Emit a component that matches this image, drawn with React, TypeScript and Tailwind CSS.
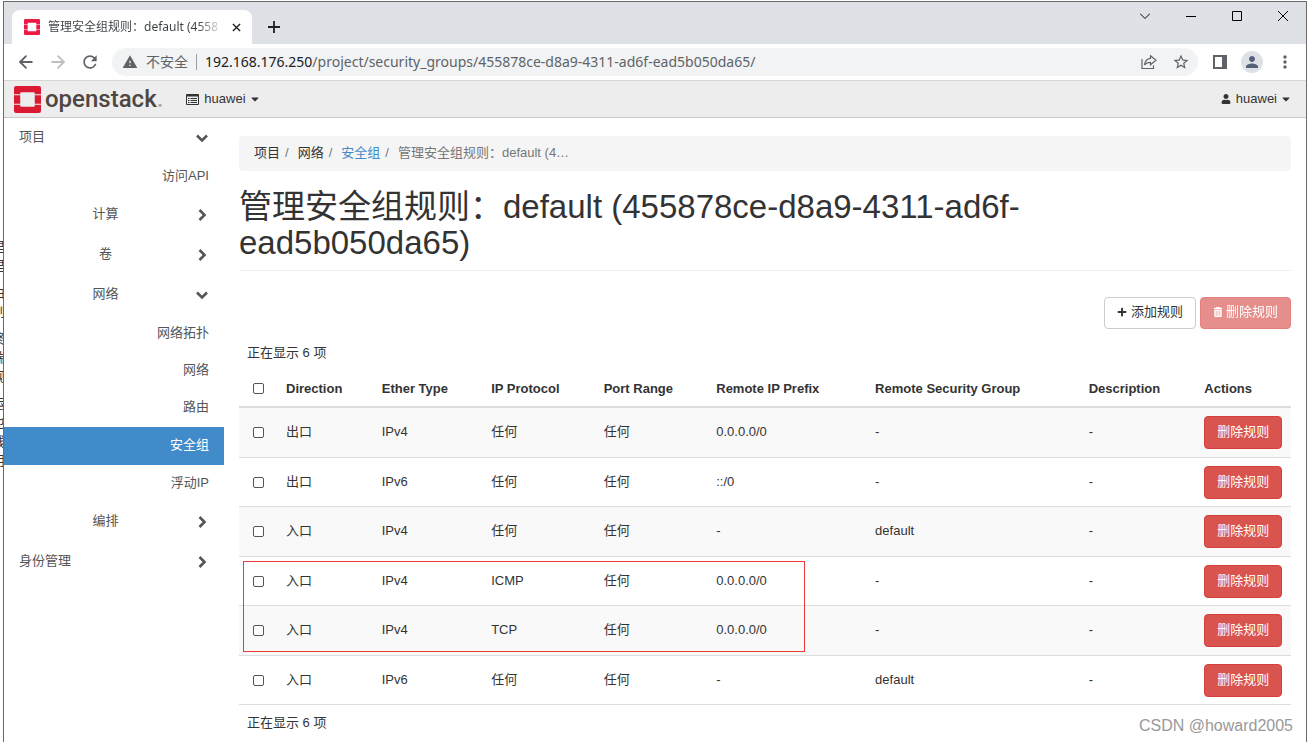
import type { ReactNode } from "react";
import { ArrowLeft, ArrowRight } from "lucide-react";
import { FaCaretDown, FaPlus, FaUser } from "react-icons/fa";
import { FaTrashCan } from "react-icons/fa6";
import { MdMoreVert, MdPerson, MdRefresh, MdStarBorder, MdWarning } from "react-icons/md";

interface Rule {
  direction: string;
  etherType: string;
  protocol: string;
  portRange: string;
  prefix: string;
  group: string;
}

const RULES: Rule[] = [
  { direction: "出口", etherType: "IPv4", protocol: "任何", portRange: "任何", prefix: "0.0.0.0/0", group: "-" },
  { direction: "出口", etherType: "IPv6", protocol: "任何", portRange: "任何", prefix: "::/0", group: "-" },
  { direction: "入口", etherType: "IPv4", protocol: "任何", portRange: "任何", prefix: "-", group: "default" },
  { direction: "入口", etherType: "IPv4", protocol: "ICMP", portRange: "任何", prefix: "0.0.0.0/0", group: "-" },
  { direction: "入口", etherType: "IPv4", protocol: "TCP", portRange: "任何", prefix: "0.0.0.0/0", group: "-" },
  { direction: "入口", etherType: "IPv6", protocol: "任何", portRange: "任何", prefix: "-", group: "default" },
];

const COLUMNS = [
  { label: "Direction", width: "w-[9.1%]" },
  { label: "Ether Type", width: "w-[10.4%]" },
  { label: "IP Protocol", width: "w-[10.7%]" },
  { label: "Port Range", width: "w-[10.7%]" },
  { label: "Remote IP Prefix", width: "w-[15.1%]" },
  { label: "Remote Security Group", width: "w-[20.3%]" },
  { label: "Description", width: "w-[11%]" },
  { label: "Actions", width: "" },
];

const BACKGROUND_LINES = [["里", "里"], ["由", "制"], ["终", "端", "观"], ["运", "也", "线", "用"]];

function OpenStackMark({ className, color }: { className: string; color: string }) {
  return (
    <svg viewBox="0 0 26 26" className={className} aria-hidden="true">
      <path
        fill={color}
        d="M2 0h22a2 2 0 0 1 2 2v6h-6V7a1 1 0 0 0-1-1H7a1 1 0 0 0-1 1v1H0V2a2 2 0 0 1 2-2zM0 9h6v8H0zM20 9h6v8h-6zM0 18h6v1a1 1 0 0 0 1 1h12a1 1 0 0 0 1-1v-1h6v6a2 2 0 0 1-2 2H2a2 2 0 0 1-2-2z"
      />
    </svg>
  );
}

function Chevron({ open }: { open?: boolean }) {
  return (
    <svg viewBox="0 0 12 12" className="size-3" fill="none" stroke="currentColor" strokeWidth="2.6" aria-hidden="true">
      <path d={open ? "M1 3.500l5 5 5-5" : "M3.500 1l5 5-5 5"} />
    </svg>
  );
}

function TabStrip() {
  return (
    <div className="flex h-[42px] shrink-0 items-end bg-[#dee1e6] pl-2 text-[#202124]">
      <div className="flex h-[34px] w-60 items-center rounded-t-lg bg-white pr-2 pl-3">
        <OpenStackMark className="mr-2 size-4 shrink-0" color="#ed1944" />
        <span className="min-w-0 flex-1 overflow-hidden bg-linear-to-r from-[#3c4043] from-85% to-transparent bg-clip-text font-['Noto_Sans','Noto_Sans_CJK_SC',sans-serif] text-xs whitespace-nowrap text-transparent">
          管理安全组规则：default (4558
        </span>
        <button aria-label="关闭标签页" className="ml-1 flex size-4 items-center justify-center">
          <svg viewBox="0 0 10 10" className="size-[9px]" stroke="currentColor" strokeWidth="1.5">
            <path d="M1 1l8 8M9 1l-8 8" />
          </svg>
        </button>
      </div>
      <button aria-label="新标签页" className="mb-[9px] ml-3.5 flex size-4 items-center justify-center">
        <svg viewBox="0 0 12 12" className="size-3" stroke="currentColor" strokeWidth="1.8">
          <path d="M6 0v12M0 6h12" />
        </svg>
      </button>
      <div className="ml-auto flex h-7 items-center gap-9 self-start pr-[18px]">
        <button aria-label="搜索标签页" className="w-2.5">
          <svg viewBox="0 0 10 10" className="size-2.5" fill="none" stroke="#000">
            <path d="M0 2.5l5 5 5-5" />
          </svg>
        </button>
        <button aria-label="最小化" className="w-2.5">
          <svg viewBox="0 0 10 10" className="size-2.5" stroke="#000">
            <path d="M0 5.5h10" />
          </svg>
        </button>
        <button aria-label="最大化" className="w-2.5">
          <svg viewBox="0 0 10 10" className="size-2.5" fill="none" stroke="#000">
            <path d="M.5.5h9v9h-9z" />
          </svg>
        </button>
        <button aria-label="关闭" className="w-2.5">
          <svg viewBox="0 0 10 10" className="size-2.5" stroke="#000">
            <path d="M0 0l10 10M10 0L0 10" />
          </svg>
        </button>
      </div>
    </div>
  );
}

function Toolbar() {
  return (
    <div className="flex h-9 shrink-0 items-center pr-[11px] pl-3 text-[#5f6368]">
      <button aria-label="后退" className="mr-3">
        <ArrowLeft className="size-5" strokeWidth={2.2} />
      </button>
      <button aria-label="前进" className="mr-3 text-[#bdbfc2]">
        <ArrowRight className="size-5" strokeWidth={2.2} />
      </button>
      <button aria-label="重新加载" className="mr-3">
        <MdRefresh className="size-5" />
      </button>
      <div className="flex h-7 flex-1 items-center rounded-full bg-[#f1f3f4] pr-2 pl-2.5 font-['Noto_Sans','Noto_Sans_CJK_SC',sans-serif] text-sm">
        <MdWarning className="size-4 shrink-0" />
        <span className="ml-2">不安全</span>
        <span className="mx-2 h-4 w-px bg-[#9aa0a6]" />
        <span className="min-w-0 flex-1 truncate">
          <span className="text-[#202124]">192.168.176.250</span>
          /project/security_groups/455878ce-d8a9-4311-ad6f-ead5b050da65/
        </span>
        <button aria-label="分享" className="mr-[15px]">
          <svg viewBox="0 0 16 16" className="size-4" fill="none" stroke="currentColor" strokeWidth="1.2">
            <path d="M1 5v9.5h11.5V11.5M9.5 1.8L15 6.3l-5.500 4.500V8.300C7 8.300 5 9 3.500 11 4 7.500 6 4.800 9.500 4.400z" />
          </svg>
        </button>
        <button aria-label="收藏">
          <MdStarBorder className="size-[18px]" />
        </button>
      </div>
      <button aria-label="侧边栏" className="ml-[15px]">
        <svg viewBox="0 0 14 14" className="size-3.5">
          <path fill="currentColor" fillRule="evenodd" d="M0 0h14v14H0zM2 2v10h7V2z" />
        </svg>
      </button>
      <button aria-label="用户" className="ml-3.5 flex size-[22px] items-center justify-center rounded-full bg-[#dee1e6]">
        <MdPerson className="size-[18px] text-[#55617a]" />
      </button>
      <button aria-label="更多" className="ml-3">
        <MdMoreVert className="size-5" />
      </button>
    </div>
  );
}

function NavBar() {
  return (
    <header className="flex h-[38px] shrink-0 items-center border-y border-t-[#d6d6d6] border-b-[#c9c9c9] bg-[#ededed] pr-3.5 pl-2.5 text-[#333]">
      <a href="#" className="flex items-center">
        <OpenStackMark className="size-[27px]" color="#da1a32" />
        <span className="ml-1 font-[Roboto,sans-serif] text-2xl leading-8 font-medium text-[#4f4641]">
          openstack<span className="text-[#aaa]">.</span>
        </span>
      </a>
      <button className="ml-[23px] flex items-center text-[13px]">
        <svg viewBox="0 0 13 11" className="mr-[5px] h-[11px] w-[13px]" fill="none" stroke="currentColor">
          <path d="M.5.500h12v10H.5z" />
          <path strokeWidth="2" d="M1 1.500h11" />
          <path d="M2 4.500h1.500M4.500 4.500H11M2 6.500h1.500M4.500 6.500H11M2 8.500h1.500M4.500 8.500H11" />
        </svg>
        huawei
        <FaCaretDown className="ml-[3px] size-3" />
      </button>
      <button className="ml-auto flex items-center text-[13px]">
        <FaUser className="mr-[5px] size-2.5" />
        huawei
        <FaCaretDown className="ml-[3px] size-3" />
      </button>
    </header>
  );
}

function MenuGroup({ label, open, nested }: { label: string; open?: boolean; nested?: boolean }) {
  return (
    <a href="#" className="flex h-10 items-center pr-4 pb-0.5 pl-[15px]">
      <span className={nested ? "w-[173px] text-center" : "w-[173px]"}>{label}</span>
      <span className="ml-auto pt-0.5">
        <Chevron open={open} />
      </span>
    </a>
  );
}

function MenuItem({ label, active }: { label: string; active?: boolean }) {
  return (
    <a
      href="#"
      className={`flex items-center justify-end pr-[15px] pb-0.5 ${active ? "mt-px h-[38px] bg-[#428bca] text-white" : "h-[37px]"}`}
    >
      {label}
    </a>
  );
}

function Sidebar() {
  return (
    <nav className="w-[220px] shrink-0 text-[13px] text-[#555]">
      <MenuGroup label="项目" open />
      <MenuItem label="访问API" />
      <MenuGroup label="计算" nested />
      <MenuGroup label="卷" nested />
      <MenuGroup label="网络" open nested />
      <MenuItem label="网络拓扑" />
      <MenuItem label="网络" />
      <MenuItem label="路由" />
      <MenuItem label="安全组" active />
      <MenuItem label="浮动IP" />
      <MenuGroup label="编排" nested />
      <MenuGroup label="身份管理" />
    </nav>
  );
}

function CheckBox({ label }: { label: string }) {
  return (
    <input
      type="checkbox"
      aria-label={label}
      className="block size-[11px] appearance-none rounded-xs border border-[#555] bg-white checked:bg-[#428bca]"
    />
  );
}

function Cell({ children }: { children: ReactNode }) {
  return <td className="px-2 pt-2 pb-2 align-top leading-8 group-even:pb-[7px]">{children}</td>;
}

function RulesTable() {
  return (
    <div className="relative">
      <table className="w-full table-fixed border-collapse text-left">
        <caption className="h-9 px-2 text-left leading-9">正在显示 6 项</caption>
        <thead>
          <tr className="h-9 border-b-2 border-[#ddd]">
            <th className="w-[39px] pl-3.5">
              <CheckBox label="全选" />
            </th>
            {COLUMNS.map((column) => (
              <th key={column.label} className={`px-2 font-bold ${column.width}`}>
                {column.label}
              </th>
            ))}
          </tr>
        </thead>
        <tbody>
          {RULES.map((rule, index) => (
            <tr key={index} className="group border-b border-[#ddd] odd:bg-[#f9f9f9]">
              <td className="pl-3.5">
                <CheckBox label={`选择规则 ${index + 1}`} />
              </td>
              <Cell>{rule.direction}</Cell>
              <Cell>{rule.etherType}</Cell>
              <Cell>{rule.protocol}</Cell>
              <Cell>{rule.portRange}</Cell>
              <Cell>{rule.prefix}</Cell>
              <Cell>{rule.group}</Cell>
              <Cell>-</Cell>
              <Cell>
                <button className="block h-[33px] w-[78px] rounded border border-[#d43f3a] bg-[#d9534f] pb-0.5 leading-5 text-white">
                  删除规则
                </button>
              </Cell>
            </tr>
          ))}
        </tbody>
      </table>
      <p className="h-9 px-2 leading-9">正在显示 6 项</p>
      {/* highlight around the ICMP and TCP rules */}
      <div className="pointer-events-none absolute top-[226px] left-1 h-[91px] w-[562px] border border-[#f03a3a]" />
    </div>
  );
}

function Content() {
  return (
    <main className="min-w-0 flex-1 pt-[18px] pr-[15px] pl-[15px] text-[13px] text-[#333]">
      <ol className="flex h-[35px] items-center rounded bg-[#f5f5f5] pb-0.5 pl-[15px] text-[#777]">
        <li className="text-[#333]">项目</li>
        <li className="px-[5px]">/</li>
        <li className="ml-1 text-[#333]">网络</li>
        <li className="px-[5px]">/</li>
        <li className="ml-1">
          <a href="#" className="text-[#428bca]">安全组</a>
        </li>
        <li className="px-[5px]">/</li>
        <li className="ml-1">管理安全组规则：default (4…</li>
      </ol>
      <div className="mt-[18px] border-b border-[#eee] pb-[9px]">
        <h1 className="max-w-[800px] text-[33px] leading-9">
          管理安全组规则：default (455878ce-d8a9-4311-ad6f-ead5b050da65)
        </h1>
      </div>
      <div className="mt-[26px] mb-1.5 flex justify-end gap-1">
        <button className="flex h-8 items-center rounded border border-[#ccc] bg-white px-3 pb-0.5">
          <FaPlus className="mr-1 size-2.5" />
          添加规则
        </button>
        <button disabled className="flex h-8 items-center rounded border border-[#d43f3a] bg-[#d9534f] px-3 pb-0.5 text-white opacity-65">
          <FaTrashCan className="mr-[3px] size-2.5" />
          删除规则
        </button>
      </div>
      <RulesTable />
    </main>
  );
}

export default function App() {
  return (
    <div className="relative flex h-screen overflow-hidden bg-white font-['Liberation_Sans','Noto_Sans_CJK_SC',sans-serif]">
      <div className="flex w-[3px] shrink-0 flex-col gap-2 overflow-hidden pt-[237px] text-[13px] leading-[19px] text-[#333]" aria-hidden="true">
        {BACKGROUND_LINES.map((lines, index) => (
          <div key={index} className="flex w-3 -translate-x-2 flex-col">
            {lines.map((line, i) => (
              <span key={i}>{line}</span>
            ))}
          </div>
        ))}
      </div>
      <div className="mt-px flex min-w-0 flex-1 flex-col border-x border-t border-[#6b6b6b]">
        <TabStrip />
        <Toolbar />
        <NavBar />
        <div className="flex flex-1">
          <Sidebar />
          <Content />
        </div>
      </div>
      <div className="absolute right-3.5 bottom-1 text-base leading-6 text-[#999]">CSDN @howard2005</div>
    </div>
  );
}
